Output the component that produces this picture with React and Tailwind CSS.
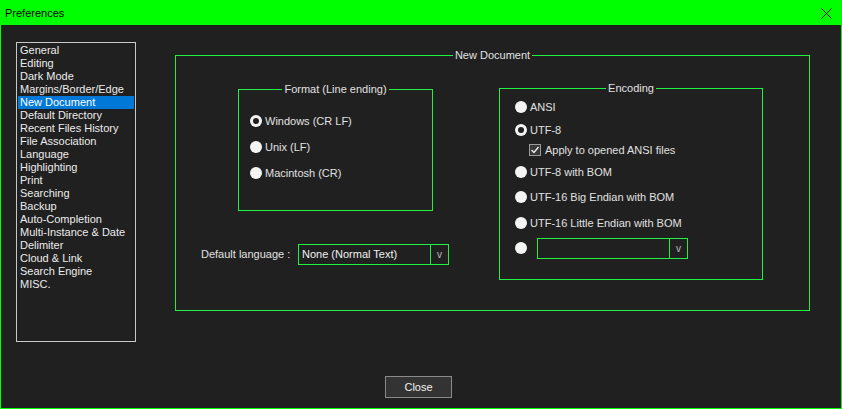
import React from 'react';

const pages = [
  'General', 'Editing', 'Dark Mode', 'Margins/Border/Edge', 'New Document',
  'Default Directory', 'Recent Files History', 'File Association', 'Language',
  'Highlighting', 'Print', 'Searching', 'Backup', 'Auto-Completion',
  'Multi-Instance & Date', 'Delimiter', 'Cloud & Link', 'Search Engine', 'MISC.',
];

function Radio({ checked }) {
  return (
    <span className="w-[12px] h-[12px] rounded-full bg-[#f4f4f4] flex items-center justify-center shrink-0">
      {checked && <span className="w-[6px] h-[6px] rounded-full bg-[#202020]" />}
    </span>
  );
}

function Combo({ value, className }) {
  return (
    <div className={`flex h-[21px] border border-[#22f040] ${className}`}>
      <div className="flex-1 flex items-center pl-[3px] text-[#f0f0f0]">{value}</div>
      <div className="w-[18px] border-l border-[#22f040] flex items-center justify-center text-[#bdbdbd] text-[10px]">v</div>
    </div>
  );
}

function Group({ title, className, children }) {
  return (
    <fieldset className={`border border-[#22f040] ${className}`}>
      <legend className="mx-auto px-[2px] leading-[13px] text-[#e0e0e0]">{title}</legend>
      {children}
    </fieldset>
  );
}

const encodings = [
  { label: 'ANSI', h: 'h-[24px]' },
  { label: 'UTF-8', h: 'h-[22px]', checked: true },
  { label: 'Apply to opened ANSI files', h: 'h-[18px]', box: true },
  { label: 'UTF-8 with BOM', h: 'h-[26px]' },
  { label: 'UTF-16 Big Endian with BOM', h: 'h-[24px]' },
  { label: 'UTF-16 Little Endian with BOM', h: 'h-[28px]' },
];

export default function App() {
  return (
    <div className="w-[842px] h-[409px] border border-[#00ff00] bg-[#202020] flex flex-col text-[11px] text-[#e0e0e0] font-['Liberation_Sans',Arial,sans-serif] overflow-hidden">
      {/* title bar */}
      <div className="h-[24px] bg-[#00ff00] flex items-center justify-between pl-[4px] pr-[9px] text-black text-[11px]">
        <span>Preferences</span>
        <svg width="11" height="11" viewBox="0 0 11 11" stroke="#000" strokeWidth="1">
          <path d="M0.5 0.5 L10.5 10.5 M10.5 0.5 L0.5 10.5" />
        </svg>
      </div>

      <div className="flex items-start pt-[17px] pl-[15px]">
        {/* page list */}
        <div className="w-[120px] h-[300px] border border-[#c8c8c8] p-[1px]">
          {pages.map((p) => (
            <div
              key={p}
              className={`h-[13px] leading-[13px] pl-[2px] whitespace-nowrap ${p === 'New Document' ? 'bg-[#0078d7] text-white' : 'text-[#ececec]'}`}
            >
              {p}
            </div>
          ))}
        </div>

        <Group title="New Document" className="ml-[39px] mt-[7px] w-[635px] h-[262px]">
          <div className="flex">
            <div className="w-[273px] flex flex-col">
              <Group title="Format (Line ending)" className="ml-[62px] mt-[21px] w-[195px] h-[128px]">
                <div className="flex flex-col pl-[11px] mt-[12px]">
                  {['Windows (CR LF)', 'Unix (LF)', 'Macintosh (CR)'].map((t, i) => (
                    <div key={t} className="h-[26px] flex items-center gap-[3px]">
                      <Radio checked={i === 0} />
                      <span>{t}</span>
                    </div>
                  ))}
                </div>
              </Group>
              <div className="flex items-center pl-[25px] mt-[33px]">
                <span className="w-[97px]">Default language :</span>
                <Combo value="None (Normal Text)" className="w-[151px]" />
              </div>
            </div>

            <Group title="Encoding" className="ml-[50px] mt-[20px] w-[264px] h-[198px]">
              <div className="flex flex-col pl-[15px]">
                {encodings.map((e) => (
                  <div key={e.label} className={`${e.h} flex items-center gap-[3px] ${e.box ? 'pl-[14px] gap-[4px]' : ''}`}>
                    {e.box ? (
                      <span className="w-[12px] h-[12px] bg-[#383838] border border-[#9a9a9a] flex items-center justify-center">
                        <svg width="10" height="10" viewBox="0 0 10 10" fill="none" stroke="#f0f0f0" strokeWidth="1.4">
                          <path d="M1.5 5 L4 7.5 L8.5 2" />
                        </svg>
                      </span>
                    ) : (
                      <Radio checked={e.checked} />
                    )}
                    <span>{e.label}</span>
                  </div>
                ))}
                <div className="h-[22px] flex items-center">
                  <Radio />
                  <Combo value="" className="ml-[10px] w-[151px]" />
                </div>
              </div>
            </Group>
          </div>
        </Group>
      </div>

      <div className="pl-[384px] mt-[34px]">
        <button className="w-[67px] h-[22px] bg-[#333333] border border-[#8a8a8a] text-[#f0f0f0] text-[11px]">
          Close
        </button>
      </div>
    </div>
  );
}
